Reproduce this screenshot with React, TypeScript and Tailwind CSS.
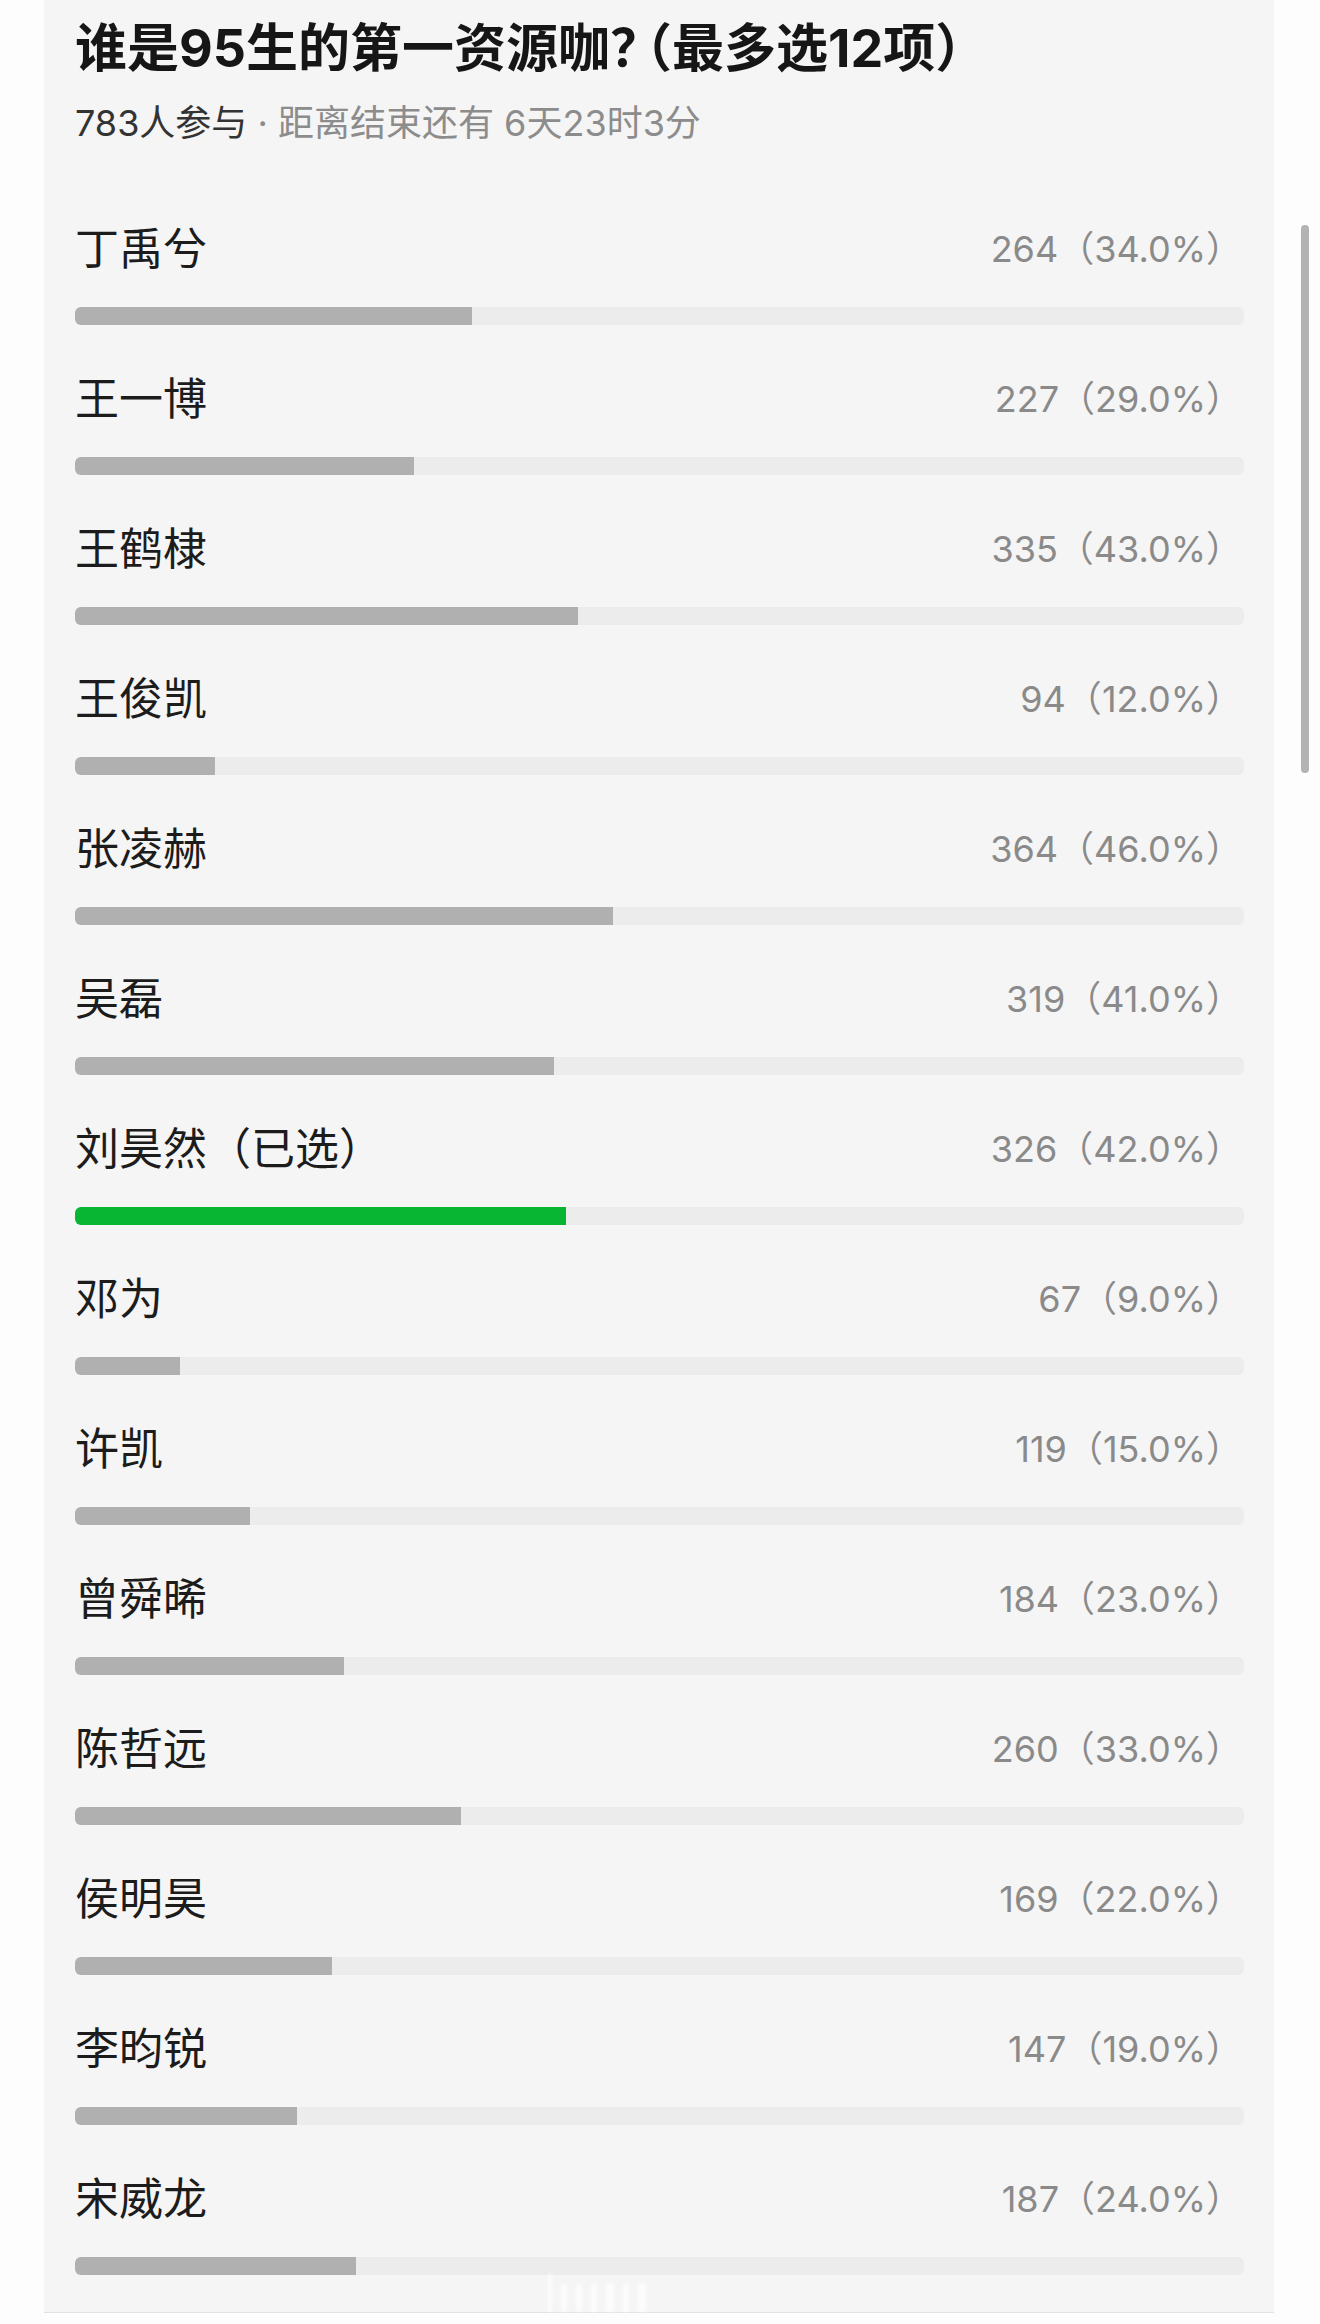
import React from 'react';

interface PollOption {
  name: string;
  votes: number;
  pct: number;
  picked?: boolean;
}

const options: PollOption[] = [
  { name: '丁禹兮', votes: 264, pct: 34.0 },
  { name: '王一博', votes: 227, pct: 29.0 },
  { name: '王鹤棣', votes: 335, pct: 43.0 },
  { name: '王俊凯', votes: 94, pct: 12.0 },
  { name: '张凌赫', votes: 364, pct: 46.0 },
  { name: '吴磊', votes: 319, pct: 41.0 },
  { name: '刘昊然（已选）', votes: 326, pct: 42.0, picked: true },
  { name: '邓为', votes: 67, pct: 9.0 },
  { name: '许凯', votes: 119, pct: 15.0 },
  { name: '曾舜晞', votes: 184, pct: 23.0 },
  { name: '陈哲远', votes: 260, pct: 33.0 },
  { name: '侯明昊', votes: 169, pct: 22.0 },
  { name: '李昀锐', votes: 147, pct: 19.0 },
  { name: '宋威龙', votes: 187, pct: 24.0 },
];

const font = "font-['Inter','Noto_Sans_CJK_SC',sans-serif]";

const OptionRow: React.FC<{ option: PollOption }> = ({ option }) => (
  <div className="pb-[46px]">
    <div className="flex h-[56px] items-center justify-between">
      <span className="text-[44px] leading-[56px] text-[#1c1c1c]">{option.name}</span>
      <span className="pr-[2px] text-[36px] leading-[56px] text-[#8a8a8a]">
        {option.votes}（{option.pct.toFixed(1)}%）
      </span>
    </div>
    <div className="mt-[30px] h-[18px] w-full overflow-hidden rounded-[6px] bg-[#ececec]">
      <div
        className={option.picked ? 'h-full bg-[#08b634]' : 'h-full bg-[#b0b0b0]'}
        style={{ width: `${option.pct}%` }}
      />
    </div>
  </div>
);

export default function App() {
  return (
    <div className={`relative flex h-[2324px] w-[1320px] overflow-hidden bg-[#fdfdfd] ${font}`}>
      <div className="ml-[44px] h-[2313px] w-[1230px] border-b border-[#e2e2e2] bg-[#f5f5f5] pl-[31px] pr-[30px] pt-[19px]">
        <h1 className="text-[52px] font-bold leading-[60px] text-[#161616]">
          谁是95生的第一资源咖
          <span className="mr-[10px] [font-feature-settings:'halt']">？</span>
          <span className="[font-feature-settings:'halt']">（</span>最多选12项）
        </h1>
        <p className="mt-[22px] text-[36px] leading-[44px]">
          <span className="text-[#333333]">783人参与</span>
          <span className="text-[#8c8c8c]"> · 距离结束还有 6天23时3分</span>
        </p>
        <div className="mt-[76px]">
          {options.map((o) => (
            <OptionRow key={o.name} option={o} />
          ))}
        </div>
      </div>
      {/* scrollbar */}
      <div className="absolute left-[1301px] top-[225px] h-[548px] w-[8px] rounded-full bg-[#b3b3b3]" />
      {/* faded watermark */}
      <div className="absolute left-[548px] top-[2274px] flex h-[38px] items-end gap-[9px] opacity-70 blur-[1px]">
        <div className="h-[38px] w-[4px] bg-white" />
        <div className="h-[28px] w-[6px] bg-white" />
        <div className="h-[28px] w-[6px] bg-white" />
        <div className="h-[28px] w-[6px] bg-white" />
        <div className="h-[28px] w-[8px] bg-white" />
        <div className="h-[28px] w-[6px] bg-white" />
        <div className="h-[28px] w-[8px] bg-white" />
      </div>
    </div>
  );
}
